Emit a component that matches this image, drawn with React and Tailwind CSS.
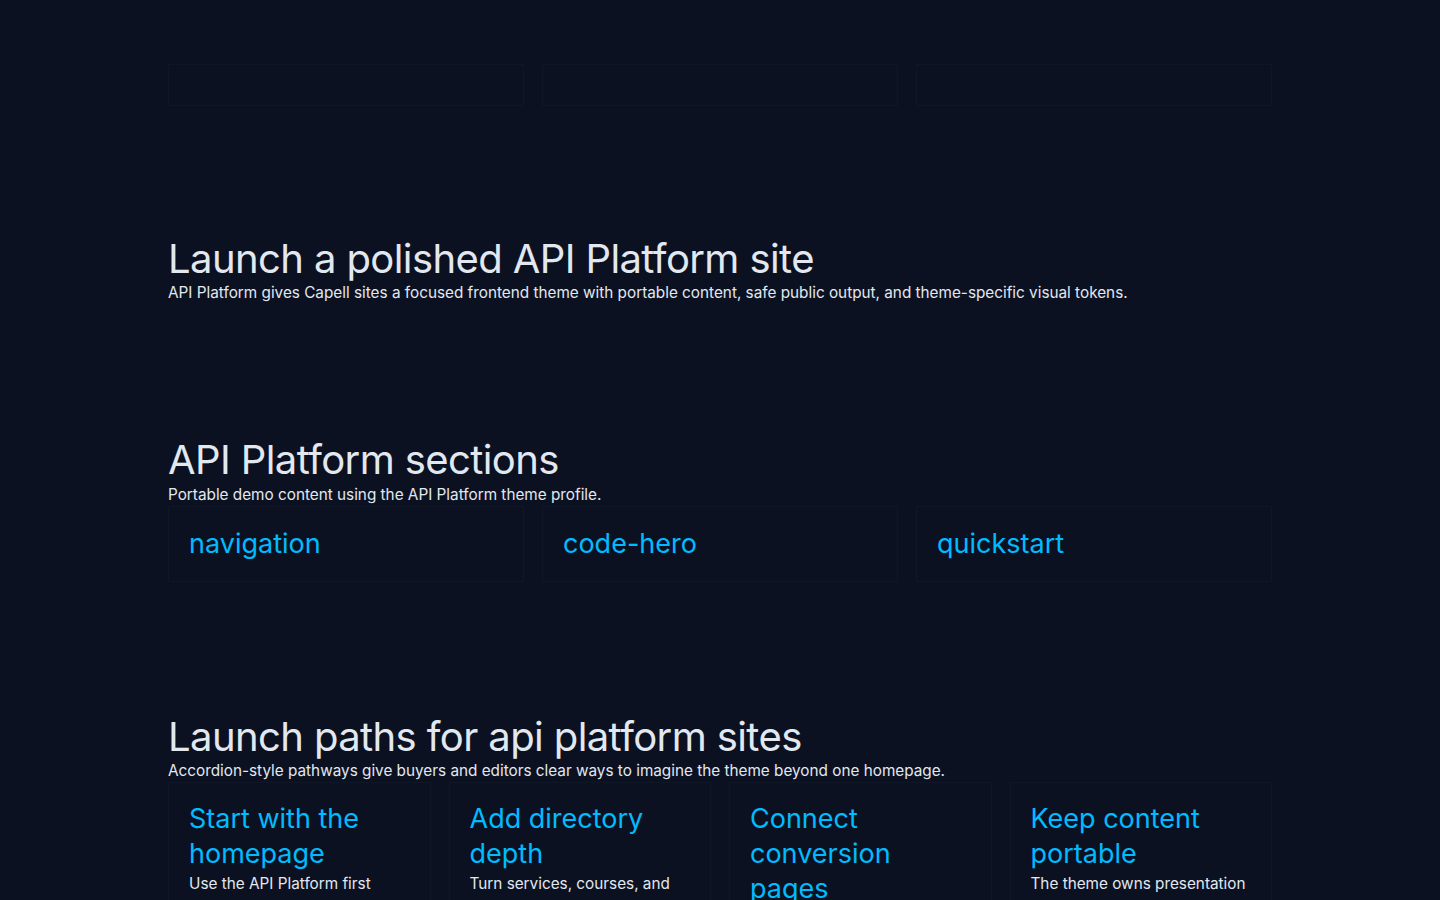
export default function App() {
  const font = { fontFamily: 'Inter, "Noto Sans", sans-serif' };
  const sections = ['navigation', 'code-hero', 'quickstart'];
  const paths = [
    ['Start with the homepage', 'Use the API Platform first screen to set a clear tone.'],
    ['Add directory depth', 'Turn services, courses, and listings into structured pages.'],
    ['Connect conversion pages', 'Link forms and offers into the journey.'],
    ['Keep content portable', 'The theme owns presentation while content stays portable.'],
  ];
  return (
    <div style={font} className="min-h-screen bg-[#0b1120] text-slate-200 overflow-hidden h-[900px]">
      <div className="mx-auto w-[1104px]">
        <div className="pt-16 grid grid-cols-3 gap-[18px]">
          {[0, 1, 2].map((i) => (
            <div key={i} className="h-[42px] border border-[#0f1727]" />
          ))}
        </div>

        <div className="mt-[130px]">
          <h1 className="text-[40px] leading-[46px] tracking-[-0.6px] text-slate-200">Launch a polished API Platform site</h1>
          <p className="text-[15.3px] leading-[20px] mt-[1px]">API Platform gives Capell sites a focused frontend theme with portable content, safe public output, and theme-specific visual tokens.</p>
        </div>

        <div className="mt-[134px]">
          <h2 className="text-[40px] leading-[46px] tracking-[-0.6px]">API Platform sections</h2>
          <p className="text-[15.3px] leading-[20px] mt-[2px]">Portable demo content using the API Platform theme profile.</p>
          <div className="mt-[1px] grid grid-cols-3 gap-[18px]">
            {sections.map((s) => (
              <div key={s} className="h-[76px] border border-[#0f1727] px-5 flex items-center">
                <span className="text-[27px] text-sky-400">{s}</span>
              </div>
            ))}
          </div>
        </div>

        <div className="mt-[132px]">
          <h2 className="text-[40px] leading-[46px] tracking-[-0.6px]">Launch paths for api platform sites</h2>
          <p className="text-[15.3px] leading-[20px] mt-[1px]">Accordion-style pathways give buyers and editors clear ways to imagine the theme beyond one homepage.</p>
          <div className="mt-[1px] grid grid-cols-4 gap-[18px]">
            {paths.map(([t, d]) => (
              <div key={t} className="border border-[#0f1727] px-5 pt-[18px] pb-5 h-[200px]">
                <h3 className="text-[27px] leading-[35px] text-sky-400">{t}</h3>
                <p className="text-[15.3px] leading-[24px] mt-[1px]">{d}</p>
              </div>
            ))}
          </div>
        </div>
      </div>
    </div>
  );
}
